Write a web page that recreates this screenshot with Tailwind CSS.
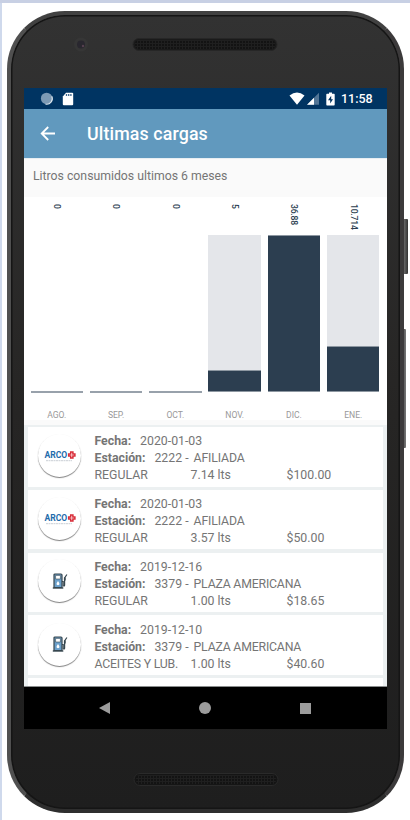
<!DOCTYPE html>
<html lang="es">
<head>
    <meta charset="UTF-8">
    <meta name="viewport" content="width=device-width, initial-scale=1.0">
    <title>Ultimas cargas</title>
    <script src="https://cdn.jsdelivr.net/npm/@tailwindcss/browser@4"></script>
</head>
<body class="h-[820px] w-[410px] overflow-hidden border-t-[3px] border-[#c8d0e4] bg-white font-['Roboto',sans-serif] text-[#757575]">
    <div class="relative flex h-[817px] border-l-2 border-[#cfd9ec] pt-2 pl-[5px]">
        <!-- Side buttons -->
        <div class="absolute top-[216px] left-[401px] h-[55px] w-[5px] rounded-r-[1px] bg-linear-to-r from-[#777] to-[#333]"></div>
        <div class="absolute top-[326px] left-[400px] h-[119px] w-[4px] rounded-r-[1px] bg-linear-to-r from-[#444] to-[#777]"></div>

        <!-- Phone body -->
        <div class="relative flex h-[802px] w-[397px] flex-col items-center rounded-[58px] border-x-[4px] border-y-[4px] border-t-[#414141] border-r-[#3c3a3b] border-b-[#2e2e2e] border-l-[#505050] bg-linear-to-b from-[#323232] via-[#262524] to-[#1e1e1e] shadow-[inset_0_0_0_1.5px_#151515]">
            <div class="flex h-[73px] w-full items-start pt-[22px] pl-[62px]">
                <svg class="h-[16px] w-[16px]" viewBox="0 0 16 16">
                    <circle cx="8" cy="7.5" r="7" fill="#363636"/>
                    <circle cx="8" cy="7.5" r="4" fill="#29272f"/>
                    <circle cx="10" cy="9" r="1.2" fill="#56404f"/>
                </svg>
                <svg class="mt-px ml-[43px] h-[13px] w-[146px]" viewBox="0 0 146 13">
                    <defs>
                        <pattern id="grille" width="3" height="3" patternUnits="userSpaceOnUse">
                            <rect width="3" height="3" fill="#1f1f1f"/>
                            <rect width="2" height="2" fill="#131313"/>
                        </pattern>
                    </defs>
                    <rect x="1" y=".5" width="144" height="12" rx="6" fill="#1a1a1a" stroke="#262626"/>
                    <rect x="3" y="2" width="140" height="9" rx="4" fill="url(#grille)"/>
                </svg>
            </div>

            <!-- Screen -->
            <div class="flex h-[641px] w-[363px] shrink-0 flex-col overflow-hidden bg-[#fafafa]">
                <!-- Status bar -->
                <div class="flex h-[21px] shrink-0 items-center bg-[#003462] pr-[14px] pl-4">
                    <svg class="h-[14px] w-[14px]" viewBox="0 0 14 14">
                        <circle cx="6.6" cy="6.4" r="5.7" fill="#7d9ab4"/>
                        <path d="M11.8 4.2A5.6 5.6 0 0 1 5.4 12" fill="none" stroke="#dce6ee" stroke-width="1.1"/>
                    </svg>
                    <svg class="ml-2 h-[14px] w-[12px]" viewBox="0 0 12 14">
                        <path d="M4 .7h6.2q1 0 1 1v10.6q0 1-1 1H1.8q-1 0-1-1V4.5z" fill="#fff"/>
                        <path d="M4.5 2v2M6.7 2v2M8.9 2v2" stroke="#3b638a" stroke-width="1.3"/>
                    </svg>
                    <svg class="ml-auto h-[13px] w-[16px]" viewBox="0 0 16 13">
                        <path d="M.5 3.5Q8-2.3 15.5 3.5L8 12.8z" fill="#fff"/>
                    </svg>
                    <svg class="ml-[2px] h-[13px] w-[12px]" viewBox="0 0 12 13">
                        <path d="M12 .7v12H0z" fill="#527596"/>
                        <path d="M7 5.8v6.9H0z" fill="#fff"/>
                    </svg>
                    <svg class="ml-[7px] h-[14px] w-[9px]" viewBox="0 0 9 14">
                        <path d="M3 .5h3v1.3h2q.7 0 .7.7v10q0 1-.7 1H1q-.7 0-.7-1v-10q0-.7.7-.7h2z" fill="#fff"/>
                        <path d="M5.2 3.8 2 8.2h2.2v3.4L7 7.2H5.2z" fill="#003462"/>
                    </svg>
                    <span class="ml-[6px] w-[32px] pt-px text-[12.5px] leading-none font-medium whitespace-nowrap text-white">11:58</span>
                </div>

                <!-- App bar -->
                <div class="flex h-[49px] shrink-0 items-center bg-[#6199be] pl-4 text-white">
                    <svg class="h-4 w-4" viewBox="0 0 16 16" fill="none" stroke="#fff" stroke-width="1.8">
                        <path d="M15 7.5H2M8.2 1 1.7 7.5l6.5 6.5"/>
                    </svg>
                    <h1 class="ml-[31px] pt-0.5 text-[17.8px] font-medium tracking-[0.13px] whitespace-nowrap">Ultimas cargas</h1>
                </div>

                <p class="flex h-[39px] shrink-0 items-center border-t border-[#e8eef2] pb-[3px] pl-[9px] text-[12.25px] whitespace-nowrap">Litros consumidos ultimos 6 meses</p>

                <!-- Bar chart: value, bar, month -->
                <div class="grid h-[223px] shrink-0 grid-cols-[repeat(6,52.5px)] gap-x-[6.8px] bg-white pl-[6.5px] text-[8.6px] text-[#2c3e50]">
                    <div class="flex flex-col items-center">
                        <span class="h-[39px] pt-[7px] leading-none font-medium [writing-mode:vertical-rl]">0</span>
                        <div class="flex h-[157px] w-full flex-col justify-end"><div class="h-[2px] bg-[#98a1ab]"></div></div>
                        <span class="mt-[16px] text-[#999]">AGO.</span>
                    </div>
                    <div class="flex flex-col items-center">
                        <span class="h-[39px] pt-[7px] leading-none font-medium [writing-mode:vertical-rl]">0</span>
                        <div class="flex h-[157px] w-full flex-col justify-end"><div class="h-[2px] bg-[#98a1ab]"></div></div>
                        <span class="mt-[16px] text-[#999]">SEP.</span>
                    </div>
                    <div class="flex flex-col items-center">
                        <span class="h-[39px] pt-[7px] leading-none font-medium [writing-mode:vertical-rl]">0</span>
                        <div class="flex h-[157px] w-full flex-col justify-end"><div class="h-[2px] bg-[#98a1ab]"></div></div>
                        <span class="mt-[16px] text-[#999]">OCT.</span>
                    </div>
                    <div class="flex flex-col items-center">
                        <span class="h-[38px] pt-[7px] leading-none font-medium [writing-mode:vertical-rl]">5</span>
                        <div class="flex h-[157px] w-full flex-col justify-end bg-[#e4e6ea]"><div class="h-[22px] border-y border-[#8d97a1] bg-[#2c3e50]"></div></div>
                        <span class="mt-[17px] text-[#999]">NOV.</span>
                    </div>
                    <div class="flex flex-col items-center">
                        <span class="h-[38px] pt-[7px] leading-none font-medium tracking-[-0.2px] [writing-mode:vertical-rl]">36.88</span>
                        <div class="flex h-[157px] w-full flex-col justify-end bg-[#e4e6ea]"><div class="h-[157px] border-y border-[#8d97a1] bg-[#2c3e50]"></div></div>
                        <span class="mt-[17px] text-[#999]">DIC.</span>
                    </div>
                    <div class="flex flex-col items-center">
                        <span class="h-[38px] pt-[7px] leading-none font-medium tracking-[-0.2px] [writing-mode:vertical-rl]">10.714</span>
                        <div class="flex h-[157px] w-full flex-col justify-end bg-[#e4e6ea]"><div class="h-[46px] border-y border-[#8d97a1] bg-[#2c3e50]"></div></div>
                        <span class="mt-[17px] text-[#999]">ENE.</span>
                    </div>
                </div>

                <!-- Refuel list -->
                <div class="mt-[5px] flex h-[262px] shrink-0 flex-col gap-[3.2px] overflow-hidden border-b border-[#8a8d8d] bg-[#ecf0f1] pt-[2px] pr-[4.5px] pl-1 text-[12.3px] leading-[17px] whitespace-nowrap">
                    <div class="flex h-[59.6px] shrink-0 bg-white pt-[6px] pl-[10px]">
                        <div class="mt-px flex h-[43px] w-[43px] items-center justify-center rounded-full bg-white shadow-[0_1px_1px_#00000080]">
                            <svg class="h-[14px] w-[32px]" viewBox="0 0 32 14">
                                <text x=".4" y="9" font-family="Roboto" font-weight="700" font-size="8.6" fill="#1f6cac" textLength="22.8" lengthAdjust="spacingAndGlyphs">ARCO</text>
                                <path d="M26.7 3h2.2v1.9h2v2.2h-2V9h-2.2V7.1h-2V4.9h2z" fill="#fff" stroke="#d82c38" stroke-width="1.5"/>
                                <path d="M2 11.7h26" stroke="#bcc3ca" stroke-width=".8" stroke-dasharray="2 .5"/>
                            </svg>
                        </div>
                        <div class="ml-[13.5px]">
                            <p><b>Fecha:</b><span class="ml-[9px]">2020-01-03</span></p>
                            <p><b>Estación:</b><span class="ml-[9px]">2222 -</span><span class="ml-[5px] tracking-[-0.15px]">AFILIADA</span></p>
                            <p class="flex"><span class="w-[96px]">REGULAR</span><span class="w-[96px]">7.14 lts</span><span>$100.00</span></p>
                        </div>
                    </div>
                    <div class="flex h-[59.6px] shrink-0 bg-white pt-[6px] pl-[10px]">
                        <div class="mt-[1.5px] flex h-[43px] w-[43px] items-center justify-center rounded-full bg-white shadow-[0_1px_1px_#00000080]">
                            <svg class="h-[14px] w-[32px]" viewBox="0 0 32 14">
                                <text x=".4" y="9" font-family="Roboto" font-weight="700" font-size="8.6" fill="#1f6cac" textLength="22.8" lengthAdjust="spacingAndGlyphs">ARCO</text>
                                <path d="M26.7 3h2.2v1.9h2v2.2h-2V9h-2.2V7.1h-2V4.9h2z" fill="#fff" stroke="#d82c38" stroke-width="1.5"/>
                                <path d="M2 11.7h26" stroke="#bcc3ca" stroke-width=".8" stroke-dasharray="2 .5"/>
                            </svg>
                        </div>
                        <div class="ml-[13.5px]">
                            <p><b>Fecha:</b><span class="ml-[9px]">2020-01-03</span></p>
                            <p><b>Estación:</b><span class="ml-[9px]">2222 -</span><span class="ml-[5px] tracking-[-0.15px]">AFILIADA</span></p>
                            <p class="flex"><span class="w-[96px]">REGULAR</span><span class="w-[96px]">3.57 lts</span><span>$50.00</span></p>
                        </div>
                    </div>
                    <div class="flex h-[59.6px] shrink-0 bg-white pt-[6px] pl-[10px]">
                        <div class="mt-[0.7px] flex h-[43px] w-[43px] items-center justify-center rounded-full bg-white shadow-[0_1px_1px_#00000080]">
                            <svg class="h-[16px] w-[16px]" viewBox="0 0 16 16">
                                <path d="M2 14.5V2q0-1 1-1h6q1 0 1 1v12.5z" fill="#6ba0cb" stroke="#37474f" stroke-width="1.2"/>
                                <path d="M3.6 2.4h4.8v3.6H3.6z" fill="#fff" stroke="#37474f" stroke-width=".6"/>
                                <path d="M6 8q3 4 0 4.2-3-.2 0-4.2z" fill="#fff"/>
                                <path d="M.8 15h10.5" stroke="#37474f" stroke-width="1.4"/>
                                <path d="M10 8.5h1.2v4.2q1.4.9 1.4-.8V5l2.3-3.5" fill="none" stroke="#37474f" stroke-width="1.2"/>
                                <path d="M12.8 4.5v3" stroke="#37474f" stroke-width="1.8"/>
                            </svg>
                        </div>
                        <div class="ml-[13.5px]">
                            <p><b>Fecha:</b><span class="ml-[9px]">2019-12-16</span></p>
                            <p><b>Estación:</b><span class="ml-[9px]">3379 -</span><span class="ml-[5px] tracking-[-0.2px]">PLAZA AMERICANA</span></p>
                            <p class="flex"><span class="w-[96px]">REGULAR</span><span class="w-[96px]">1.00 lts</span><span>$18.65</span></p>
                        </div>
                    </div>
                    <div class="flex h-[59.6px] shrink-0 bg-white pt-[6.5px] pl-[10px]">
                        <div class="mt-[0.7px] flex h-[43px] w-[43px] items-center justify-center rounded-full bg-white shadow-[0_1px_1px_#00000080]">
                            <svg class="h-[16px] w-[16px]" viewBox="0 0 16 16">
                                <path d="M2 14.5V2q0-1 1-1h6q1 0 1 1v12.5z" fill="#6ba0cb" stroke="#37474f" stroke-width="1.2"/>
                                <path d="M3.6 2.4h4.8v3.6H3.6z" fill="#fff" stroke="#37474f" stroke-width=".6"/>
                                <path d="M6 8q3 4 0 4.2-3-.2 0-4.2z" fill="#fff"/>
                                <path d="M.8 15h10.5" stroke="#37474f" stroke-width="1.4"/>
                                <path d="M10 8.5h1.2v4.2q1.4.9 1.4-.8V5l2.3-3.5" fill="none" stroke="#37474f" stroke-width="1.2"/>
                                <path d="M12.8 4.5v3" stroke="#37474f" stroke-width="1.8"/>
                            </svg>
                        </div>
                        <div class="ml-[13.5px]">
                            <p><b>Fecha:</b><span class="ml-[9px]">2019-12-10</span></p>
                            <p><b>Estación:</b><span class="ml-[9px]">3379 -</span><span class="ml-[5px] tracking-[-0.2px]">PLAZA AMERICANA</span></p>
                            <p class="flex"><span class="w-[96px] tracking-[-0.2px]">ACEITES Y LUB.</span><span class="w-[96px]">1.00 lts</span><span>$40.60</span></p>
                        </div>
                    </div>
                    <div class="h-[59.6px] shrink-0 bg-white"></div>
                </div>

                <!-- Navigation bar -->
                <div class="flex grow items-center bg-black pl-[75px]">
                    <svg class="h-3 w-[11px]" viewBox="0 0 11 12"><path d="M11 0v12L0 6z" fill="#9c9c9c"/></svg>
                    <div class="ml-[89px] h-3 w-3 rounded-full bg-[#9c9c9c]"></div>
                    <div class="ml-[89px] h-[11px] w-[11px] bg-[#9c9c9c]"></div>
                </div>
            </div>

            <svg class="mt-[44px] h-[13px] w-[146px]" viewBox="0 0 146 13">
                <rect x="1" y=".5" width="144" height="12" rx="6" fill="#151515" stroke="#2a2a2a"/>
                <rect x="3" y="2" width="140" height="9" rx="4" fill="url(#grille)"/>
            </svg>
        </div>
    </div>
</body>
</html>
